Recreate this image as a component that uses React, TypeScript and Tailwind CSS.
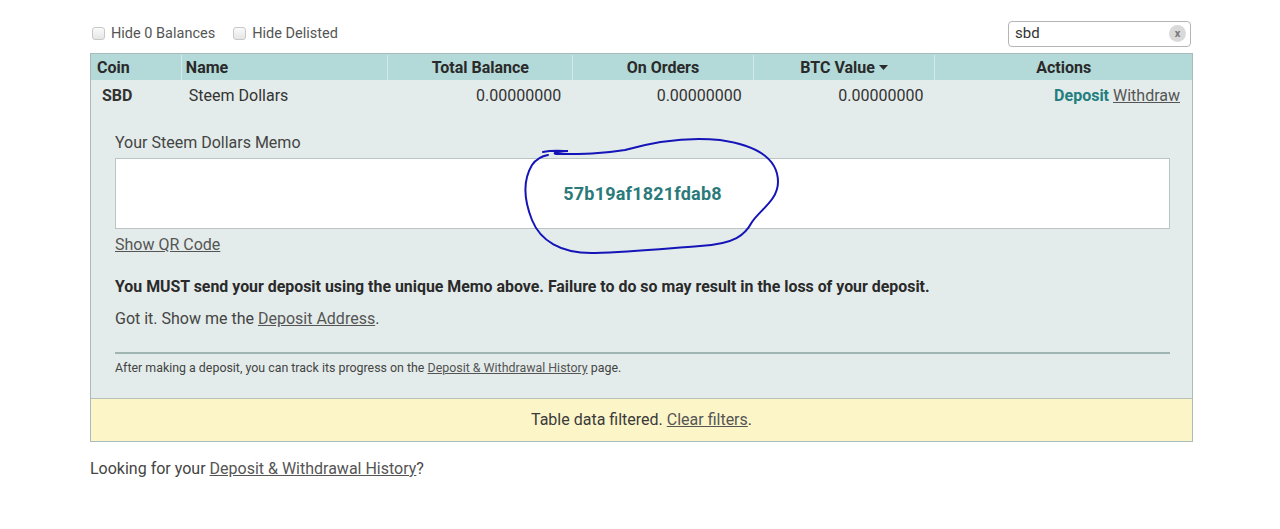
import React from "react";

const cols = [
  { label: "Coin", w: "w-[90px]", align: "text-left pl-[6px]" },
  { label: "Name", w: "w-[207px]", align: "text-left pl-[4px]" },
  { label: "Total Balance", w: "w-[185px]", align: "text-center" },
  { label: "On Orders", w: "w-[181px]", align: "text-center" },
  { label: "BTC Value", w: "w-[182px]", align: "text-center", sort: true },
  { label: "Actions", w: "w-[258px]", align: "text-center" },
];

function Check({ label }: { label: string }) {
  return (
    <label className="flex items-center gap-[6px] text-[14.5px] text-[#555]">
      <span className="w-[13px] h-[13px] rounded-[3px] border border-[#c8c8c8] bg-gradient-to-b from-[#fafafa] to-[#e6e6e6]" />
      {label}
    </label>
  );
}

function Scribble() {
  return (
    <svg className="absolute left-[520px] top-[132px] pointer-events-none" width="265" height="128" viewBox="520 132 265 128">
      <path
        d="M543 152 C552 150 562 151 568 151 C556 152 552 153 556 154 C585 154 600 154 625 150 C660 140 690 137 720 140 C755 145 778 158 778 182 C778 200 760 210 752 222 C745 235 735 244 700 246 C660 249 630 252 595 253 C560 254 540 240 532 220 C524 200 523 180 532 165 C537 158 542 156 548 155"
        fill="none"
        stroke="#1414b8"
        strokeWidth="2"
        strokeLinecap="round"
      />
    </svg>
  );
}

export default function App() {
  return (
    <div className="relative w-[1280px] h-[529px] bg-white font-['Roboto',sans-serif] text-[#333]">
      <div className="ml-[90px] w-[1103px] pt-[20px]">
        <div className="flex items-center h-[26px] pt-[1px]">
          <div className="flex items-center gap-[18px] pl-[2px]">
            <Check label="Hide 0 Balances" />
            <Check label="Hide Delisted" />
          </div>
          <div className="ml-auto mr-[2px] w-[183px] h-[26px] border border-[#b5b5b5] rounded-[4px] flex items-center pl-[6px] pr-[4px] text-[15px] text-[#333]">
            <span>sbd</span>
            <span className="ml-auto w-[17px] h-[17px] rounded-full bg-[#d9d9d9] text-[#777] text-[11px] font-bold flex items-center justify-center leading-none">x</span>
          </div>
        </div>

        <div className="mt-[7px] border border-[#a9bcbc]">
          <div className="flex h-[26px] pt-[1px] bg-[#b3d9d8] text-[16px] font-bold text-[#2a2a2a]">
            {cols.map((c, i) => (
              <div
                key={c.label}
                className={`${c.w} ${c.align} flex items-center ${c.align.includes("center") ? "justify-center" : ""} ${i > 0 ? "border-l border-[#d3eaea]" : ""}`}
              >
                {c.label}
                {c.sort && (
                  <svg width="9" height="5" viewBox="0 0 9 5" className="ml-[4px]">
                    <path d="M0 0 H9 L4.5 5 Z" fill="#2a2a2a" />
                  </svg>
                )}
              </div>
            ))}
          </div>

          <div className="bg-[#e3ecea]">
            <div className="flex h-[32px] items-center text-[16px]">
              <div className="w-[90px] pl-[11px] font-bold">SBD</div>
              <div className="w-[207px] pl-[8px]">Steem Dollars</div>
              <div className="w-[185px] text-right pr-[11px]">0.00000000</div>
              <div className="w-[181px] text-right pr-[11px]">0.00000000</div>
              <div className="w-[182px] text-right pr-[11px]">0.00000000</div>
              <div className="w-[258px] text-right pr-[12px]">
                <span className="font-bold text-[#237f7f]">Deposit</span>{" "}
                <span className="underline text-[#555]">Withdraw</span>
              </div>
            </div>

            <div className="pl-[24px] pr-[22px] pt-[21px] pb-[21px]">
              <div className="text-[16px] text-[#444] leading-[20px]">Your Steem Dollars Memo</div>
              <div className="mt-[5px] h-[71px] bg-white border border-[#b9c4c3] flex items-center justify-center">
                <span className="text-[18px] font-bold text-[#2b7a7a] tracking-[0.2px]">57b19af1821fdab8</span>
              </div>
              <div className="mt-[6px] text-[16px] text-[#555] underline leading-[20px]">Show QR Code</div>
              <div className="mt-[22px] text-[15.9px] font-bold text-[#2a2a2a] leading-[20px]">
                You MUST send your deposit using the unique Memo above. Failure to do so may result in the loss of your deposit.
              </div>
              <div className="mt-[12px] text-[16px] text-[#444] leading-[20px]">
                Got it. Show me the <span className="underline text-[#555]">Deposit Address</span>.
              </div>
              <div className="mt-[23px] border-t-2 border-[#9fb5b2]" />
              <div className="mt-[5px] text-[12.4px] text-[#444] leading-[18px]">
                After making a deposit, you can track its progress on the{" "}
                <span className="underline text-[#555]">Deposit &amp; Withdrawal History</span> page.
              </div>
            </div>
          </div>

          <div className="h-[43px] bg-[#fcf5c8] border-t border-[#b9c2ba] flex items-center justify-center text-[16px] text-[#3a3a3a]">
            Table data filtered.&nbsp;<span className="underline text-[#555]">Clear filters</span>.
          </div>
        </div>

        <div className="mt-[15px] text-[16px] text-[#444]">
          Looking for your <span className="underline text-[#555]">Deposit &amp; Withdrawal History</span>?
        </div>
      </div>
      <Scribble />
    </div>
  );
}
